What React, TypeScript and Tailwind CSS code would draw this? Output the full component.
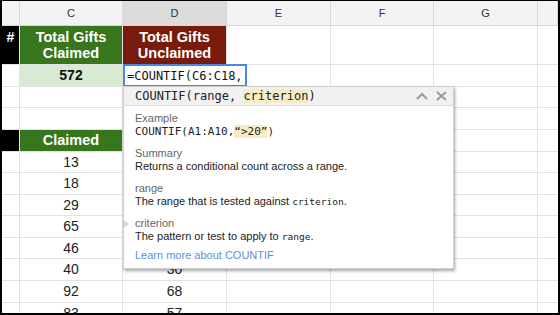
const cols = [
  { key: "h", w: "w-[18px]" },
  { key: "C", w: "w-[103px]" },
  { key: "D", w: "w-[104px]" },
  { key: "E", w: "w-[104px]" },
  { key: "F", w: "w-[103px]" },
  { key: "G", w: "w-[104px]" },
  { key: "H", w: "flex-1" },
];

type Row = {
  h: string;
  head?: boolean;
  c?: string;
  cKind?: "green" | "light" | "plain";
  d?: string;
  dKind?: "red" | "plain";
};

// D cells under the hint popup are left blank
const rows: Row[] = [
  { h: "h-[39px]", head: true, c: "Total Gifts\nClaimed", cKind: "green", d: "Total Gifts\nUnclaimed", dKind: "red" },
  { h: "h-[22px]", c: "572", cKind: "light" },
  { h: "h-[21px]" },
  { h: "h-[22px]" },
  { h: "h-[22px]", head: true, c: "Claimed", cKind: "green" },
  { h: "h-[21px]", c: "13" },
  { h: "h-[22px]", c: "18" },
  { h: "h-[21px]", c: "29" },
  { h: "h-[22px]", c: "65" },
  { h: "h-[21px]", c: "46" },
  { h: "h-[22px]", c: "40", d: "30" },
  { h: "h-[22px]", c: "92", d: "68" },
  { h: "h-[21px]", c: "83", d: "57" },
];

function Cell({ text, kind }: { text?: string; kind?: string }) {
  if (kind === "green")
    return (
      <div className="h-full flex items-center justify-center text-center bg-[#38761d] text-white font-bold text-[14.5px] leading-[16.5px] whitespace-pre-line">
        {text}
      </div>
    );
  if (kind === "red")
    return (
      <div className="h-full flex items-center justify-center text-center bg-[#781b0d] text-white font-bold text-[14.5px] leading-[16.5px] whitespace-pre-line">
        {text}
      </div>
    );
  if (kind === "light")
    return (
      <div className="h-full flex items-center justify-center bg-[#d9ead3] text-[#111] font-bold text-[14px]">
        {text}
      </div>
    );
  return (
    <div className="h-full flex items-center justify-center text-[#222] text-[14px]">{text}</div>
  );
}

function Popup() {
  return (
    <div className="absolute left-[121px] top-[85px] w-[331px] h-[183px] bg-white border border-[#d0d0d0] shadow-[1px_2px_3px_rgba(0,0,0,0.35)]">
      <div className="h-[19px] flex items-center pl-[11px] pr-[6px] bg-[#f1f1f1] border-b border-[#dcdcdc] font-['DejaVu_Sans_Mono',monospace] text-[12px] text-[#222]">
        <span>
          COUNTIF(range, <span className="bg-[#f8ecc7]">criterion</span>)
        </span>
        <div className="ml-auto flex items-center gap-[8px]">
          <svg width="12" height="8" viewBox="0 0 12 8">
            <polyline points="1,7 6,2 11,7" fill="none" stroke="#9a9a9a" strokeWidth="2" />
          </svg>
          <svg width="11" height="10" viewBox="0 0 11 10">
            <path d="M1 1 L10 9 M10 1 L1 9" stroke="#9a9a9a" strokeWidth="2" />
          </svg>
        </div>
      </div>
      <div className="relative pl-[11px] pt-[6px] text-[11px] leading-[13px] font-['Liberation_Sans',Arial,sans-serif]">
        <div>
          <div className="text-[#666]">Example</div>
          <div className="font-['DejaVu_Sans_Mono',monospace] text-[11px] text-[#222]">
            COUNTIF(A1:A10,<span className="bg-[#f8ecc7]">“&gt;20”</span>)
          </div>
        </div>
        <div className="mt-[9px]">
          <div className="text-[#666]">Summary</div>
          <div className="text-[#222]">Returns a conditional count across a range.</div>
        </div>
        <div className="mt-[9px]">
          <div className="text-[#666]">range</div>
          <div className="text-[#222]">
            The range that is tested against{" "}
            <span className="font-['DejaVu_Sans_Mono',monospace] text-[9.5px]">criterion</span>.
          </div>
        </div>
        <div className="relative mt-[9px]">
          <div className="absolute left-[-11px] top-[3px] w-0 h-0 border-y-[4px] border-y-transparent border-l-[5px] border-l-[#d8d8d8]" />
          <div className="text-[#666]">criterion</div>
          <div className="text-[#222]">
            The pattern or test to apply to{" "}
            <span className="font-['DejaVu_Sans_Mono',monospace] text-[9.5px]">range</span>.
          </div>
        </div>
        <div className="mt-[6px] text-[#5b8fe0]">Learn more about COUNTIF</div>
      </div>
    </div>
  );
}

export default function App() {
  return (
    <div className="w-[560px] h-[315px] bg-black pt-px px-[2px] pb-[2px] box-border">
      <div className="relative h-full bg-white overflow-hidden font-['Liberation_Sans',Arial,sans-serif]">
        <div className="flex h-[25px] border-b border-[#d6d6d6]">
          {cols.map((c) => (
            <div
              key={c.key}
              className={`${c.w} shrink-0 flex items-center justify-center border-r border-[#d9d9d9] text-[11px] text-[#333] ${
                c.key === "D" ? "bg-[#dcdcdc]" : "bg-[#f3f3f3]"
              }`}
            >
              {c.key === "h" || c.key === "H" ? "" : c.key}
            </div>
          ))}
        </div>
        {rows.map((r, i) => (
          <div key={i} className={`flex ${r.h} shrink-0`}>
            <div
              className={`w-[18px] shrink-0 border-r border-b border-[#e2e2e2] ${
                r.head ? "bg-black text-white font-bold text-[14px] leading-[16px] flex justify-center pt-[3px]" : ""
              }`}
            >
              {r.head && i === 0 ? "#" : ""}
            </div>
            <div className="w-[103px] shrink-0 border-r border-b border-[#e2e2e2]">
              <Cell text={r.c} kind={r.cKind} />
            </div>
            <div className="w-[104px] shrink-0 border-r border-b border-[#e2e2e2]">
              <Cell text={r.d} kind={r.dKind} />
            </div>
            <div className="w-[104px] shrink-0 border-r border-b border-[#e2e2e2]" />
            <div className="w-[103px] shrink-0 border-r border-b border-[#e2e2e2]" />
            <div className="w-[104px] shrink-0 border-r border-b border-[#e2e2e2]" />
            <div className="flex-1 border-b border-[#e2e2e2]" />
          </div>
        ))}

        <div className="absolute left-[121px] top-[63px] w-[124px] h-[23px] bg-white border-2 border-[#4a86e8] flex items-center pl-[2px] font-['DejaVu_Sans_Mono',monospace] text-[12px] text-[#111]">
          =COUNTIF(C6:C18,
        </div>

        <Popup />
      </div>
    </div>
  );
}
